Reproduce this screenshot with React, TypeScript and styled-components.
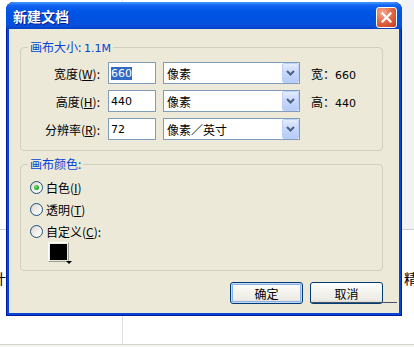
import * as React from "react"
import styled, { createGlobalStyle } from "styled-components"

const CJK = `"Noto Sans CJK SC", "Noto Sans", sans-serif`
const NUM = `"DejaVu Sans", "Noto Sans CJK SC", sans-serif`

const GlobalStyle = createGlobalStyle`
  html, body {
    margin: 0;
    padding: 0;
    background: #fff;
  }
  body {
    font-family: ${CJK};
  }
`

interface SizeRow {
  label: string
  key: string
  rest: string
  value: string
  unit: string
  readout?: { label: string; value: string }
  selected?: boolean
}

const sizeRows: SizeRow[] = [
  { label: "宽度", key: "W", rest: "):", value: "660", unit: "像素", readout: { label: "宽：", value: "660" }, selected: true },
  { label: "高度", key: "H", rest: "):", value: "440", unit: "像素", readout: { label: "高：", value: "440" } },
  { label: "分辨率", key: "R", rest: "):", value: "72", unit: "像素／英寸" },
]

const colorOptions = [
  { label: "白色", key: "I", rest: ")", checked: true },
  { label: "透明", key: "T", rest: ")", checked: false },
  { label: "自定义", key: "C", rest: "):", checked: false },
]

const ChevronDown = () => (
  <svg width="9" height="6" viewBox="0 0 9 6">
    <path d="M1 1 L4.5 4.5 L8 1" fill="none" stroke="#4d6185" strokeWidth="2" />
  </svg>
)

const CloseGlyph = () => (
  <svg width="11" height="11" viewBox="0 0 11 11">
    <path d="M1.5 1.5 L9.5 9.5 M9.5 1.5 L1.5 9.5" stroke="#fff" strokeWidth="2.2" strokeLinecap="square" />
  </svg>
)

export default function App() {
  return (
    <>
      <GlobalStyle />
      <Page>
        <UpperBand>
          <LeftColumn />
          <div />
          <SideStrip />
        </UpperBand>
        <LowerBand>
          <LeftColumn>
            <BackText $offset={-8}>计</BackText>
          </LeftColumn>
          <div>
            <BackText $offset={281}>精</BackText>
          </div>
        </LowerBand>
        <Footer />

        <Window>
          <TitleBar>
            <Title>新建文档</Title>
            <CloseButton aria-label="关闭">
              <CloseGlyph />
            </CloseButton>
          </TitleBar>

          <DialogBody>
            <GroupBox>
              <GroupLegend>
                画布大小: <Small>1.1M</Small>
              </GroupLegend>
              <SizeGrid>
                {sizeRows.map((row) => (
                  <SizeLine key={row.key}>
                    <FieldLabel>
                      {row.label}(<u>{row.key}</u>
                      {row.rest}
                    </FieldLabel>
                    <TextBox>
                      {row.selected ? <Selected>{row.value}</Selected> : row.value}
                    </TextBox>
                    <Combo>
                      <ComboText>{row.unit}</ComboText>
                      <ComboButton>
                        <ChevronDown />
                      </ComboButton>
                    </Combo>
                    {row.readout && (
                      <Readout>
                        {row.readout.label}
                        <Small>{row.readout.value}</Small>
                      </Readout>
                    )}
                  </SizeLine>
                ))}
              </SizeGrid>
            </GroupBox>

            <ColorGroup>
              <GroupLegend>画布颜色:</GroupLegend>
              <RadioList>
                {colorOptions.map((opt) => (
                  <RadioRow key={opt.key}>
                    <RadioCircle $checked={opt.checked} />
                    <span>
                      {opt.label}(<u>{opt.key}</u>
                      {opt.rest}
                    </span>
                  </RadioRow>
                ))}
                <Swatch>
                  <SwatchFill />
                </Swatch>
              </RadioList>
            </ColorGroup>

            <ButtonRow>
              <PushButton $default>确定</PushButton>
              <PushButton>取消</PushButton>
            </ButtonRow>
          </DialogBody>
        </Window>
      </Page>
    </>
  )
}

const Page = styled.div`
  position: relative;
  width: 414px;
  height: 347px;
  overflow: hidden;
  background: #fff;
  display: flex;
  flex-direction: column;
`

const UpperBand = styled.div`
  height: 229px;
  border-bottom: 1px solid #cdcdcd;
  display: grid;
  grid-template-columns: 123px 1fr 12px;
`

const LeftColumn = styled.div`
  border-right: 1px solid #e2e2e2;
  overflow: hidden;
`

const SideStrip = styled.div`
  background: #f2f2f5;
`

const LowerBand = styled.div`
  height: 114px;
  border-bottom: 1px solid #d6d3ca;
  display: grid;
  grid-template-columns: 123px 1fr;
`

const BackText = styled.div<{ $offset: number }>`
  padding-top: 40px;
  margin-left: ${(p) => p.$offset}px;
  font: 14px/16px ${CJK};
  color: #000;
  white-space: nowrap;
`

const Footer = styled.div`
  flex: 1;
  background: #f3f3f3;
`

const Window = styled.section`
  position: absolute;
  left: 6px;
  top: 2px;
  width: 396px;
  height: 314px;
  box-sizing: border-box;
  display: flex;
  flex-direction: column;
  padding: 0 3px 3px;
  border-radius: 8px 8px 0 0;
  background: #0845d7;
  box-shadow: inset 0 0 0 1px #001a9c;
`

const TitleBar = styled.header`
  height: 27px;
  margin: 0 -3px;
  padding: 0 5px 0 7px;
  display: flex;
  align-items: center;
  justify-content: space-between;
  border-radius: 8px 8px 0 0;
  background: linear-gradient(
    180deg,
    #4a9bff 0%,
    #1265f2 12%,
    #0055e5 35%,
    #0052e1 70%,
    #0a4fdc 88%,
    #003fc2 100%
  );
`

const Title = styled.span`
  color: #fff;
  font: bold 14px/16px ${CJK};
  text-shadow: 1px 1px 0 #0a1883;
`

const CloseButton = styled.button`
  align-self: flex-start;
  margin-top: 5px;
  width: 21px;
  height: 21px;
  padding: 0;
  box-sizing: border-box;
  border: 1px solid #fff;
  border-radius: 3px;
  background: radial-gradient(circle at 30% 25%, #f4ad95 0%, #e26a47 45%, #c33c1b 100%);
  display: grid;
  place-items: center;
`

const DialogBody = styled.div`
  flex: 1;
  background: #ece9d8;
  padding: 11px 16px 0 11px;
  display: flex;
  flex-direction: column;
`

const GroupBox = styled.fieldset`
  margin: 0;
  padding: 0 0 10px;
  border: 1px solid #d0d0bf;
  border-radius: 4px;
  min-width: 0;
`

const ColorGroup = styled(GroupBox)`
  margin-top: 6px;
  padding-bottom: 8px;
`

const GroupLegend = styled.legend`
  margin-left: 7px;
  padding: 0 2px;
  height: 14px;
  color: #0046d5;
  font: 12px/14px ${CJK};
`

const Small = styled.span`
  font: 11px/1 ${NUM};
`

const SizeGrid = styled.div`
  padding-top: 8px;
  display: flex;
  flex-direction: column;
  gap: 6px;
`

const SizeLine = styled.div`
  height: 22px;
  display: flex;
  align-items: center;
`

const FieldLabel = styled.span`
  width: 79px;
  text-align: right;
  font: 12px ${CJK};
  color: #000;
`

const TextBox = styled.div`
  margin-left: 8px;
  width: 48px;
  height: 22px;
  box-sizing: border-box;
  border: 1px solid #7f9db9;
  background: #fff;
  padding-left: 2px;
  display: flex;
  align-items: center;
  font: 11px ${NUM};
  color: #000;
`

const Selected = styled.span`
  background: #316ac5;
  color: #fff;
  line-height: 13px;
`

const Combo = styled.div`
  margin-left: 7px;
  width: 137px;
  height: 22px;
  box-sizing: border-box;
  border: 1px solid #7f9db9;
  background: #fff;
  display: flex;
  align-items: stretch;
`

const ComboText = styled.span`
  flex: 1;
  padding-left: 3px;
  display: flex;
  align-items: center;
  font: 12px ${CJK};
  color: #000;
`

const ComboButton = styled.span`
  width: 17px;
  box-sizing: border-box;
  border: 1px solid #bdd0fa;
  border-radius: 2px;
  background: linear-gradient(180deg, #e4ecfe 0%, #c9d9fc 45%, #b6cbf7 100%);
  display: grid;
  place-items: center;
`

const Readout = styled.span`
  margin-left: 11px;
  font: 12px ${CJK};
  color: #000;
`

const RadioList = styled.div`
  padding: 5px 0 0 9px;
  display: flex;
  flex-direction: column;
`

const RadioRow = styled.div`
  height: 22px;
  display: flex;
  align-items: center;
  gap: 3px;
  font: 12px ${CJK};
  color: #000;
`

const RadioCircle = styled.span<{ $checked?: boolean }>`
  width: 13px;
  height: 13px;
  box-sizing: border-box;
  border-radius: 50%;
  border: 1px solid #1c5180;
  background: linear-gradient(135deg, #d6d5ce 0%, #f4f3ee 60%, #ffffff 100%);
  display: grid;
  place-items: center;

  &::after {
    content: "";
    display: ${(p) => (p.$checked ? "block" : "none")};
    width: 5px;
    height: 5px;
    border-radius: 50%;
    background: radial-gradient(circle at 35% 35%, #6fdc6f, #21a121 70%);
  }
`

const Swatch = styled.div`
  position: relative;
  margin: 0 0 0 18px;
  width: 21px;
  height: 20px;
  box-sizing: border-box;
  border: 1px solid;
  border-color: #fff #a09d8f #a09d8f #fff;
  padding: 1px;

  &::after {
    content: "";
    position: absolute;
    right: -4px;
    bottom: -3px;
    border-left: 3px solid transparent;
    border-right: 3px solid transparent;
    border-top: 3px solid #000;
  }
`

const SwatchFill = styled.div`
  width: 100%;
  height: 100%;
  background: #000;
`

const ButtonRow = styled.div`
  position: relative;
  margin-top: 11px;
  display: flex;
  justify-content: flex-end;
  gap: 7px;

  &::after {
    content: "";
    position: absolute;
    left: 290px;
    top: 20px;
    width: 87px;
    height: 1px;
    background: #45566b;
  }
`

const PushButton = styled.button<{ $default?: boolean }>`
  width: 73px;
  height: 22px;
  padding: 0;
  border: 1px solid #003c74;
  border-radius: 3px;
  background: linear-gradient(180deg, #ffffff 0%, #f5f4ef 40%, #ecebe6 85%, #d6d0c5 100%);
  font: 12px ${CJK};
  color: #000;
  box-shadow: ${(p) =>
    p.$default ? "inset 0 0 0 1px #c4d8f8, inset 0 0 0 2px #8eaee6" : "none"};
`
